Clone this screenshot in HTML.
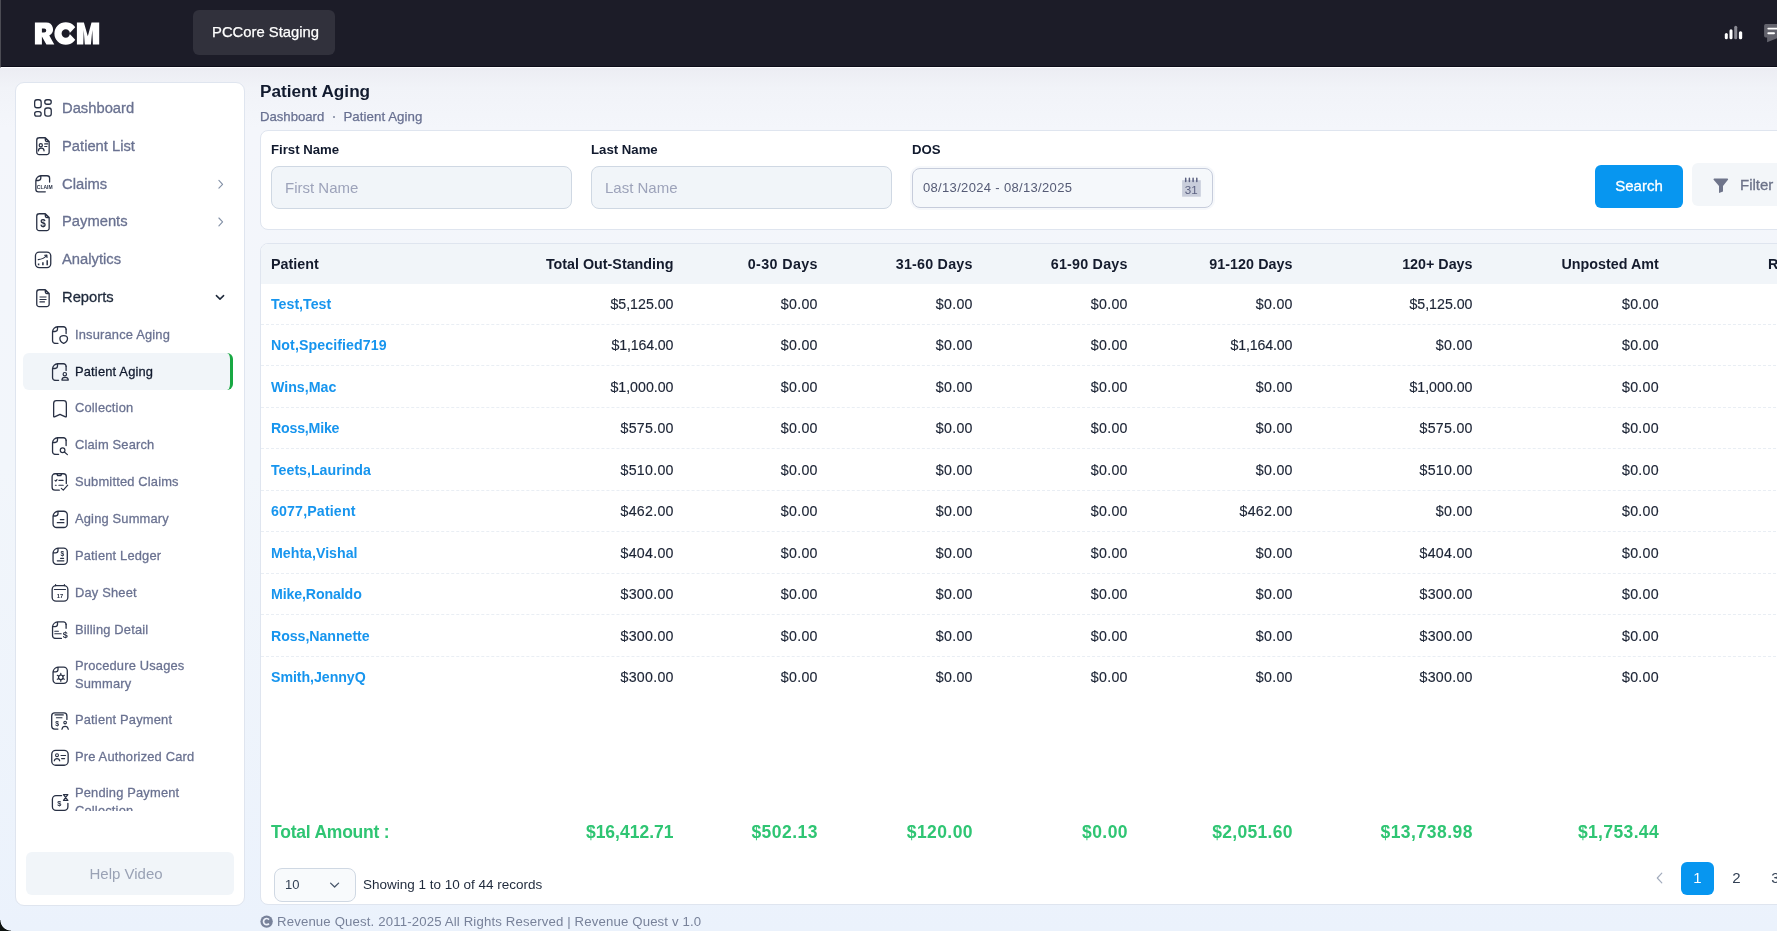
<!DOCTYPE html>
<html>
<head>
<meta charset="utf-8">
<title>Patient Aging</title>
<style>
*{box-sizing:border-box;margin:0;padding:0}
html,body{width:1777px;height:931px;overflow:hidden}
body{font-family:"Liberation Sans",sans-serif;background:#eef2fb;position:relative;color:#1e293b}
#root{position:absolute;left:0;top:0;width:1777px;height:931px;will-change:transform}
.abs{position:absolute}
#bg{left:0;top:68px;width:1777px;height:863px;background:linear-gradient(180deg,#ecedf3 0px,#f1f3f8 20px,#f4f6fb 60px,#f2f6fb 400px,#ebf2fc 863px)}
#hdr{left:0;top:0;width:1777px;height:68px;background:#1c1c28;border-bottom:1px solid #fdfdff;box-shadow:inset 0 -1px 0 #0c0c19;border-left:1px solid #4c4c54}
#env{left:193px;top:10px;width:142px;height:45px;background:#31313c;border-radius:6px;color:#fff;font-size:14.8px;line-height:44.5px;text-align:center;padding-left:3px;-webkit-text-stroke:.25px}
#side{left:15px;top:82px;width:230px;height:824px;background:#fff;border:1px solid #dfe5ef;border-radius:9px}
#sclip{left:16px;top:83px;width:228px;height:728px;overflow:hidden}
.mi{position:absolute;left:46px;font-size:14.75px;color:#6a7291;-webkit-text-stroke:.3px;line-height:20px;white-space:nowrap}
.si{position:absolute;left:59px;font-size:12.9px;letter-spacing:.17px;color:#6a7291;-webkit-text-stroke:.28px;line-height:18px;white-space:nowrap}
#act{left:7px;top:270px;width:210px;height:37px;background:#f1f5f9;border-radius:6px;border-right:3px solid #18a843}
#help{left:26px;top:852px;width:208px;height:42.5px;background:#f1f5f9;border-radius:6px;color:#9aa2b5;font-size:15px;line-height:44.5px;padding-left:63.5px}
#title{left:260px;top:80px;font-size:17.2px;font-weight:700;color:#111a2e;line-height:22px}
#crumb{left:260px;top:108px;font-size:13.3px;color:#687091;-webkit-text-stroke:.25px;line-height:17px;white-space:nowrap}
#fcard{left:260px;top:130px;width:1540px;height:100px;background:#fff;border:1px solid #dfe5ef;border-radius:8px}
.lbl{position:absolute;top:141px;font-size:13.2px;font-weight:700;color:#111a2e;line-height:17px}
.inp{position:absolute;top:166px;width:301px;height:43px;background:#f1f5f9;border:1px solid #cfd8e3;border-radius:8px;font-size:15px;color:#9da3ba;line-height:41px;padding-left:13px}
#search{left:1595px;top:165px;width:88px;height:43px;background:#0796f0;border-radius:6px;color:#fff;-webkit-text-stroke:.3px;font-size:15px;line-height:41px;text-align:center}
#filter{left:1692px;top:163px;width:120px;height:43px;background:#f3f6f9;border-radius:6px;color:#6c7389;-webkit-text-stroke:.3px;font-size:15px;line-height:43px;padding-left:48px}
#tcard{left:260px;top:243px;width:1540px;height:662px;background:#fff;border:1px solid #dfe5ef;border-radius:8px}
#thead{left:261px;top:244px;width:1530px;height:40px;background:#f1f5f9;border-radius:7px 0 0 0}
.th{position:absolute;top:256px;font-size:14.3px;font-weight:700;color:#141b2d;line-height:17px;white-space:nowrap;text-align:right}
.rl{position:absolute;left:261px;width:1530px;height:0;border-top:1px dashed #e9eef4}
.td{position:absolute;font-size:14.2px;color:#1c2435;-webkit-text-stroke:.15px;line-height:17px;white-space:nowrap;text-align:right}
.nm{position:absolute;left:271px;font-size:14.2px;font-weight:700;color:#1795ee;line-height:17px;white-space:nowrap}
.tot{position:absolute;top:821px;font-size:17.5px;font-weight:700;color:#2fc573;line-height:22px;white-space:nowrap;text-align:right}
#sel{left:274px;top:868px;width:82px;height:34px;background:#f8fafc;border:1px solid #cfd8e3;border-radius:8px;font-size:13px;color:#334155;line-height:32px;padding-left:10px}
#showing{left:363px;top:876px;font-size:13.5px;color:#1e293b;line-height:17px;white-space:nowrap}
.pg{position:absolute;top:862px;width:33px;height:33px;border-radius:6px;font-size:15px;line-height:31px;text-align:center;color:#334155}
#foot{left:277px;top:913px;font-size:13.2px;letter-spacing:.15px;color:#78829a;line-height:17px;white-space:nowrap}
#corner{left:0;top:920px;width:11px;height:11px;background:radial-gradient(circle at 11px 0,transparent 10.2px,#0d1210 11px)}
.dos{position:absolute;left:912px;top:168px;width:301px;height:40px;background:#f5f8fb;border:1px solid #c6ccdb;border-radius:8px;box-shadow:0 0 0 2px #f6f8fb;font-size:13px;letter-spacing:.33px;color:#555b75;line-height:38px;padding-left:10px}
</style>
</head>
<body>
<div id="root">
<div id="bg" class="abs"></div>
<div id="hdr" class="abs"></div>
<div id="tcard" class="abs"></div><div id="thead" class="abs"></div>
<div id="env" class="abs">PCCore Staging</div>
<div id="side" class="abs"></div>
<div id="sclip" class="abs">
<div id="act" class="abs"></div>
<div class="mi" style="top:15px">Dashboard</div>
<div class="mi" style="top:53px">Patient List</div>
<div class="mi" style="top:91px">Claims</div>
<div class="mi" style="top:128px">Payments</div>
<div class="mi" style="top:166px">Analytics</div>
<div class="mi" style="top:204px;color:#1e293b">Reports</div>
<div class="si" style="top:243px">Insurance Aging</div>
<div class="si" style="top:280px;color:#111a2e">Patient Aging</div>
<div class="si" style="top:316px">Collection</div>
<div class="si" style="top:353px">Claim Search</div>
<div class="si" style="top:390px">Submitted Claims</div>
<div class="si" style="top:427px">Aging Summary</div>
<div class="si" style="top:464px">Patient Ledger</div>
<div class="si" style="top:501px">Day Sheet</div>
<div class="si" style="top:538px">Billing Detail</div>
<div class="si" style="top:574px">Procedure Usages<br>Summary</div>
<div class="si" style="top:628px">Patient Payment</div>
<div class="si" style="top:665px">Pre Authorized Card</div>
<div class="si" style="top:701px">Pending Payment<br>Collection</div>
</div>
<div id="help" class="abs">Help Video</div>
<div id="title" class="abs">Patient Aging</div>
<div id="crumb" class="abs"><span style="font-size:13.15px">Dashboard</span><span style="position:absolute;left:72.6px;top:7.6px;width:2.6px;height:2.6px;border-radius:2px;background:#7b839d"></span><span style="position:absolute;left:83.4px;top:0;letter-spacing:.05px">Patient Aging</span></div>
<div id="fcard" class="abs"></div>
<div class="lbl" style="left:271px">First Name</div>
<div class="lbl" style="left:591px">Last Name</div>
<div class="lbl" style="left:912px">DOS</div>
<div class="inp" style="left:271px">First Name</div>
<div class="inp" style="left:591px">Last Name</div>
<div class="dos">08/13/2024 - 08/13/2025</div>
<div id="search" class="abs">Search</div>
<div id="filter" class="abs">Filter</div>
<div id="sel" class="abs">10</div>
<div id="showing" class="abs">Showing 1 to 10 of 44 records</div>
<div class="pg" style="left:1681px;background:#0796f0;color:#fff">1</div>
<div class="pg" style="left:1720px">2</div>
<div class="pg" style="left:1759px">3</div>
<div id="foot" class="abs">Revenue Quest. 2011-2025 All Rights Reserved | Revenue Quest v 1.0</div>
<div id="corner" class="abs"></div>

<div class="th" style="left:271px;text-align:left">Patient</div>
<div class="th" style="right:1103.5px;letter-spacing:0px">Total Out-Standing</div>
<div class="th" style="right:959.12px;letter-spacing:0.38px">0-30 Days</div>
<div class="th" style="right:804.27px;letter-spacing:0.23px">31-60 Days</div>
<div class="th" style="right:649.27px;letter-spacing:0.23px">61-90 Days</div>
<div class="th" style="right:484.44px;letter-spacing:0.06px">91-120 Days</div>
<div class="th" style="right:304.5px;letter-spacing:0px">120+ Days</div>
<div class="th" style="right:118.29999999999995px;letter-spacing:0px">Unposted Amt</div>
<div class="th" style="left:1768px;text-align:left">Responsible</div>
<div class="rl" style="top:324px"></div>
<div class="nm" style="top:295.50px;letter-spacing:0px">Test,Test</div>
<div class="td" style="top:295.50px;right:1103.5px;letter-spacing:0px">$5,125.00</div>
<div class="td" style="top:295.50px;right:959.18px;letter-spacing:0.32px">$0.00</div>
<div class="td" style="top:295.50px;right:804.18px;letter-spacing:0.32px">$0.00</div>
<div class="td" style="top:295.50px;right:649.18px;letter-spacing:0.32px">$0.00</div>
<div class="td" style="top:295.50px;right:484.18px;letter-spacing:0.32px">$0.00</div>
<div class="td" style="top:295.50px;right:304.5px;letter-spacing:0px">$5,125.00</div>
<div class="td" style="top:295.50px;right:117.97999999999996px;letter-spacing:0.32px">$0.00</div>
<div class="rl" style="top:365px"></div>
<div class="nm" style="top:337.00px;letter-spacing:0.09px">Not,Specified719</div>
<div class="td" style="top:337.00px;right:1103.64px;letter-spacing:-0.14px">$1,164.00</div>
<div class="td" style="top:337.00px;right:959.18px;letter-spacing:0.32px">$0.00</div>
<div class="td" style="top:337.00px;right:804.18px;letter-spacing:0.32px">$0.00</div>
<div class="td" style="top:337.00px;right:649.18px;letter-spacing:0.32px">$0.00</div>
<div class="td" style="top:337.00px;right:484.64px;letter-spacing:-0.14px">$1,164.00</div>
<div class="td" style="top:337.00px;right:304.18px;letter-spacing:0.32px">$0.00</div>
<div class="td" style="top:337.00px;right:117.97999999999996px;letter-spacing:0.32px">$0.00</div>
<div class="rl" style="top:407px"></div>
<div class="nm" style="top:378.50px;letter-spacing:0px">Wins,Mac</div>
<div class="td" style="top:378.50px;right:1103.5px;letter-spacing:0px">$1,000.00</div>
<div class="td" style="top:378.50px;right:959.18px;letter-spacing:0.32px">$0.00</div>
<div class="td" style="top:378.50px;right:804.18px;letter-spacing:0.32px">$0.00</div>
<div class="td" style="top:378.50px;right:649.18px;letter-spacing:0.32px">$0.00</div>
<div class="td" style="top:378.50px;right:484.18px;letter-spacing:0.32px">$0.00</div>
<div class="td" style="top:378.50px;right:304.5px;letter-spacing:0px">$1,000.00</div>
<div class="td" style="top:378.50px;right:117.97999999999996px;letter-spacing:0.32px">$0.00</div>
<div class="rl" style="top:448px"></div>
<div class="nm" style="top:420.00px;letter-spacing:-0.21px">Ross,Mike</div>
<div class="td" style="top:420.00px;right:1103.22px;letter-spacing:0.28px">$575.00</div>
<div class="td" style="top:420.00px;right:959.18px;letter-spacing:0.32px">$0.00</div>
<div class="td" style="top:420.00px;right:804.18px;letter-spacing:0.32px">$0.00</div>
<div class="td" style="top:420.00px;right:649.18px;letter-spacing:0.32px">$0.00</div>
<div class="td" style="top:420.00px;right:484.18px;letter-spacing:0.32px">$0.00</div>
<div class="td" style="top:420.00px;right:304.22px;letter-spacing:0.28px">$575.00</div>
<div class="td" style="top:420.00px;right:117.97999999999996px;letter-spacing:0.32px">$0.00</div>
<div class="rl" style="top:490px"></div>
<div class="nm" style="top:461.50px;letter-spacing:0px">Teets,Laurinda</div>
<div class="td" style="top:461.50px;right:1103.22px;letter-spacing:0.28px">$510.00</div>
<div class="td" style="top:461.50px;right:959.18px;letter-spacing:0.32px">$0.00</div>
<div class="td" style="top:461.50px;right:804.18px;letter-spacing:0.32px">$0.00</div>
<div class="td" style="top:461.50px;right:649.18px;letter-spacing:0.32px">$0.00</div>
<div class="td" style="top:461.50px;right:484.18px;letter-spacing:0.32px">$0.00</div>
<div class="td" style="top:461.50px;right:304.22px;letter-spacing:0.28px">$510.00</div>
<div class="td" style="top:461.50px;right:117.97999999999996px;letter-spacing:0.32px">$0.00</div>
<div class="rl" style="top:531px"></div>
<div class="nm" style="top:503.00px;letter-spacing:0.15px">6077,Patient</div>
<div class="td" style="top:503.00px;right:1103.22px;letter-spacing:0.28px">$462.00</div>
<div class="td" style="top:503.00px;right:959.18px;letter-spacing:0.32px">$0.00</div>
<div class="td" style="top:503.00px;right:804.18px;letter-spacing:0.32px">$0.00</div>
<div class="td" style="top:503.00px;right:649.18px;letter-spacing:0.32px">$0.00</div>
<div class="td" style="top:503.00px;right:484.22px;letter-spacing:0.28px">$462.00</div>
<div class="td" style="top:503.00px;right:304.18px;letter-spacing:0.32px">$0.00</div>
<div class="td" style="top:503.00px;right:117.97999999999996px;letter-spacing:0.32px">$0.00</div>
<div class="rl" style="top:573px"></div>
<div class="nm" style="top:544.50px;letter-spacing:0px">Mehta,Vishal</div>
<div class="td" style="top:544.50px;right:1103.22px;letter-spacing:0.28px">$404.00</div>
<div class="td" style="top:544.50px;right:959.18px;letter-spacing:0.32px">$0.00</div>
<div class="td" style="top:544.50px;right:804.18px;letter-spacing:0.32px">$0.00</div>
<div class="td" style="top:544.50px;right:649.18px;letter-spacing:0.32px">$0.00</div>
<div class="td" style="top:544.50px;right:484.18px;letter-spacing:0.32px">$0.00</div>
<div class="td" style="top:544.50px;right:304.22px;letter-spacing:0.28px">$404.00</div>
<div class="td" style="top:544.50px;right:117.97999999999996px;letter-spacing:0.32px">$0.00</div>
<div class="rl" style="top:614px"></div>
<div class="nm" style="top:586.00px;letter-spacing:-0.13px">Mike,Ronaldo</div>
<div class="td" style="top:586.00px;right:1103.22px;letter-spacing:0.28px">$300.00</div>
<div class="td" style="top:586.00px;right:959.18px;letter-spacing:0.32px">$0.00</div>
<div class="td" style="top:586.00px;right:804.18px;letter-spacing:0.32px">$0.00</div>
<div class="td" style="top:586.00px;right:649.18px;letter-spacing:0.32px">$0.00</div>
<div class="td" style="top:586.00px;right:484.18px;letter-spacing:0.32px">$0.00</div>
<div class="td" style="top:586.00px;right:304.22px;letter-spacing:0.28px">$300.00</div>
<div class="td" style="top:586.00px;right:117.97999999999996px;letter-spacing:0.32px">$0.00</div>
<div class="rl" style="top:656px"></div>
<div class="nm" style="top:627.50px;letter-spacing:-0.06px">Ross,Nannette</div>
<div class="td" style="top:627.50px;right:1103.22px;letter-spacing:0.28px">$300.00</div>
<div class="td" style="top:627.50px;right:959.18px;letter-spacing:0.32px">$0.00</div>
<div class="td" style="top:627.50px;right:804.18px;letter-spacing:0.32px">$0.00</div>
<div class="td" style="top:627.50px;right:649.18px;letter-spacing:0.32px">$0.00</div>
<div class="td" style="top:627.50px;right:484.18px;letter-spacing:0.32px">$0.00</div>
<div class="td" style="top:627.50px;right:304.22px;letter-spacing:0.28px">$300.00</div>
<div class="td" style="top:627.50px;right:117.97999999999996px;letter-spacing:0.32px">$0.00</div>
<div class="nm" style="top:669.00px;letter-spacing:-0.06px">Smith,JennyQ</div>
<div class="td" style="top:669.00px;right:1103.22px;letter-spacing:0.28px">$300.00</div>
<div class="td" style="top:669.00px;right:959.18px;letter-spacing:0.32px">$0.00</div>
<div class="td" style="top:669.00px;right:804.18px;letter-spacing:0.32px">$0.00</div>
<div class="td" style="top:669.00px;right:649.18px;letter-spacing:0.32px">$0.00</div>
<div class="td" style="top:669.00px;right:484.18px;letter-spacing:0.32px">$0.00</div>
<div class="td" style="top:669.00px;right:304.22px;letter-spacing:0.28px">$300.00</div>
<div class="td" style="top:669.00px;right:117.97999999999996px;letter-spacing:0.32px">$0.00</div>
<div class="tot" style="left:271px;text-align:left;letter-spacing:-.22px">Total Amount :</div>
<div class="tot" style="right:1103.5px;letter-spacing:0px">$16,412.71</div>
<div class="tot" style="right:959.03px;letter-spacing:0.47px">$502.13</div>
<div class="tot" style="right:804.1px;letter-spacing:0.4px">$120.00</div>
<div class="tot" style="right:649.1px;letter-spacing:0.4px">$0.00</div>
<div class="tot" style="right:484.2px;letter-spacing:0.3px">$2,051.60</div>
<div class="tot" style="right:304.0px;letter-spacing:0.5px">$13,738.98</div>
<div class="tot" style="right:117.92999999999995px;letter-spacing:0.37px">$1,753.44</div>
<svg class="abs" style="left:30px;top:18px" width="75" height="30" viewBox="30 18 75 30">
<path fill="#fff" fill-rule="evenodd" d="M34.9,22.6H46.2a6.85,6.85 0 0 1 3.1,12.95L54.3,44.4H46.4L41.9,36.6V44.4H34.9zM41.9,28.5V32.6H44.2a2.05,2.05 0 0 0 0-4.1z"/>
<circle cx="65.75" cy="33.5" r="7.75" fill="none" stroke="#fff" stroke-width="7.2"/>
<path fill="#1c1c28" d="M69.3,33.5L79,23.2V43.8z"/>
<path fill="#fff" d="M76.9,44.4V22.6H83.9L87.8,36.2L91.5,22.6H99.2V44.4H92.9L92.3,30L90.9,44.4H84.8L83.7,30L83.3,44.4z"/>
</svg>
<svg class="abs" style="left:0;top:0" width="260" height="931" viewBox="0 0 260 931" fill="none" stroke="#283044" stroke-width="1.3" stroke-linecap="round" stroke-linejoin="round">
<defs>
<path id="doc" d="M2.9,.65H9.2L13.05,4.4V15.1a2.4,2.4 0 0 1-2.4,2.4H3.05a2.4,2.4 0 0 1-2.4-2.4V3.05A2.4,2.4 0 0 1 3.05,.65zM9.2,.65V3a1.4,1.4 0 0 0 1.4,1.4H13.05"/>
<path id="odoc" d="M5.6,.65H11.6a2.6,2.6 0 0 1 2.6,2.6M5.6,.65C3.2,.9 .9,3 .65,5.4V14.6a2.6,2.6 0 0 0 2.6,2.6M5.6,.65V3a2.4,2.4 0 0 1-2.4,2.4H.65"/>
<path id="rdoc" d="M5.6,.65H11.3a3.6,3.6 0 0 1 3.6,3.6V13.3a3.6,3.6 0 0 1-3.6,3.6H4.25a3.6,3.6 0 0 1-3.6-3.6V5.4C.9,3 3.2,.9 5.6,.65zM5.6,.65V3a2.4,2.4 0 0 1-2.4,2.4H.65"/>
</defs>
<!-- dashboard -->
<rect x="34.65" y="99.75" width="6.5" height="8" rx="2.3"/>
<rect x="44.75" y="99.75" width="6.5" height="4.5" rx="2.2"/>
<rect x="34.65" y="111.55" width="6.5" height="4.6" rx="2.2"/>
<rect x="44.75" y="108" width="6.5" height="8.15" rx="2.3"/>
<!-- patient list -->
<use href="#doc" x="36.1" y="137.1"/>
<circle cx="40.8" cy="145.3" r="1.6" stroke-width="1.2"/>
<path d="M38.4,150.9C38.6,147.3 43.9,147.3 44.1,150.9M44.7,143.9h3M44.7,146.5h2.2" stroke-width="1.2"/>
<!-- claims -->
<path d="M40.8,175.75H47a2.6,2.6 0 0 1 2.6,2.6V182M40.8,175.75C38.4,176 36.1,178.1 35.85,180.5V189.2a2.6,2.6 0 0 0 2.6,2.6H45.3M40.8,175.75V178.1a2.4,2.4 0 0 1-2.4,2.4H35.85"/>
<text x="36.8" y="188.9" font-family="Liberation Sans" font-weight="700" font-size="5.6" fill="#283044" stroke="none" textLength="15.8" lengthAdjust="spacingAndGlyphs">CLAIM</text>
<!-- payments -->
<use href="#doc" x="36.1" y="213.1"/>
<text x="43" y="226.8" font-family="Liberation Sans" font-weight="700" font-size="10" fill="#283044" stroke="none" text-anchor="middle">$</text>
<!-- analytics -->
<rect x="35.45" y="252.15" width="15.3" height="15.4" rx="3.8"/>
<path d="M38.6,263.4V265.3M42.9,262.2V265.3M47.2,260.2V265.3" stroke-width="1.5" stroke-linecap="butt"/>
<path d="M38.2,259.6C42,259.3 44.8,257.8 46.6,255.5M44.6,255.2L46.9,255.1L47,257.4" stroke-width="1.1"/>
<!-- reports -->
<use href="#doc" x="36.1" y="289.1"/>
<path d="M39.5,297h7M39.5,299.5h7M39.5,301.9h5.4" stroke-width="1.2" stroke-linecap="butt"/>
<!-- chevrons -->
<path d="M218.9,180.4L222.6,184.3L218.9,188.2M218.9,218L222.6,221.9L218.9,225.8" stroke="#8290a6" stroke-width="1.1"/>
<path d="M216.4,295.6L220,299.1L223.6,295.6" stroke="#1e293b" stroke-width="1.5"/>
<!-- insurance aging -->
<use href="#odoc" x="51.9" y="326.1"/><path d="M66.1,329.3V333.6M55.1,343.3H58"/>
<path d="M63.7,335.7C65.7,335.7 67.5,336.6 67.5,338.6C67.5,341 65.6,342.6 63.7,343.4C61.8,342.6 59.9,341 59.9,338.6C59.9,336.6 61.7,335.7 63.7,335.7z"/>
<!-- patient aging -->
<use href="#odoc" x="51.9" y="363.1"/><path d="M66.1,366.3V370.4M55.1,380.3H58.6"/>
<circle cx="64.8" cy="374.2" r="1.7" stroke-width="1.2"/><path d="M61.9,380.1C61.9,376.4 68.3,376.4 68.3,380.1z" stroke-width="1.2"/>
<!-- collection -->
<path d="M53.65,403.4a2.7,2.7 0 0 1 2.7-2.7h7.3a2.7,2.7 0 0 1 2.7,2.7V416.3a.6,.6 0 0 1-.9,.55L60,414.3L54.55,416.85a.6,.6 0 0 1-.9-.55z"/>
<!-- claim search -->
<use href="#odoc" x="51.9" y="437.1"/><path d="M66.1,440.3V445.6M55.1,454.3H58.6"/>
<circle cx="62.6" cy="450.2" r="2.35" stroke-width="1.2"/><path d="M64.4,452L67.4,454.6" stroke-width="1.2"/>
<!-- submitted claims -->
<path d="M59.3,490.15H55a2.9,2.9 0 0 1-2.9-2.9V476.65a2.9,2.9 0 0 1 2.9-2.9H63.4a2.9,2.9 0 0 1 2.9,2.9V483.6M56.8,473.9L57.7,475.6H60.8L61.7,473.9" />
<path d="M55,480.4L55.8,481.1L57,479.6M58.9,480.3H63.2M55.4,485.2H56.2M58.9,485.2H63.2M61.3,488.3L63.3,490.2L67.7,485.2" stroke-width="1.15"/>
<!-- aging summary -->
<use href="#rdoc" x="52.4" y="510.6"/>
<path d="M60.3,519.6H63.9M57.3,522.7H63.9" stroke-width="1.2"/>
<!-- patient ledger -->
<use href="#rdoc" x="52.4" y="547.4"/>
<text x="62.3" y="556" font-family="Liberation Sans" font-weight="700" font-size="6.6" fill="#283044" stroke="none" text-anchor="middle">$</text>
<path d="M60.6,558.3H63.6M57.3,560.8H63.9" stroke-width="1.2"/>
<!-- day sheet -->
<rect x="52.15" y="585.6" width="15.7" height="15.6" rx="3.9"/>
<path d="M54.4,589.5H65.5M55.6,584.7V585.6M64.4,584.7V585.6" stroke-width="1.2"/>
<text x="60" y="597.9" font-family="Liberation Sans" font-weight="700" font-size="5.8" fill="#283044" stroke="none" text-anchor="middle">17</text>
<!-- billing detail -->
<use href="#odoc" x="51.9" y="621.2"/><path d="M66.1,624.4V628.3M55.1,638.4H61.4"/>
<path d="M54.8,631.3H58.4M54.8,633.7H61.2" stroke-width="1.1"/>
<text x="65.3" y="638" font-family="Liberation Sans" font-weight="700" font-size="9" fill="#283044" stroke="none" text-anchor="middle">$</text>
<!-- procedure usages -->
<use href="#rdoc" x="52.4" y="666.5"/>
<circle cx="60.8" cy="677.3" r="2.3" stroke-width="1.2"/>
<path d="M60.8,673.3V675M60.8,679.6V681.3M57.3,675.3L58.8,676.15M62.8,678.45L64.3,679.3M57.3,679.3L58.8,678.45M62.8,676.15L64.3,675.3" stroke-width="1.2"/>
<!-- patient payment -->
<path d="M57.9,729.1H54.7a3,3 0 0 1-3-3V715.9a3,3 0 0 1 3-3H63.9a3,3 0 0 1 3,3V719.4"/>
<path d="M55,714.9H63.3M56.4,717.7H62" stroke-width="1.15"/>
<text x="57.2" y="726.2" font-family="Liberation Sans" font-weight="700" font-size="6.8" fill="#283044" stroke="none" text-anchor="middle">$</text>
<circle cx="65.1" cy="722.6" r="1.3" stroke-width="1.1"/><path d="M61.9,729.3C62.6,725.4 67.6,725.4 68.3,729.3" stroke-width="1.15"/>
<!-- pre authorized card -->
<rect x="51.75" y="750.35" width="16.4" height="14.9" rx="4"/>
<circle cx="57" cy="755.2" r="1.45" stroke-width="1.1"/>
<path d="M54.3,760.8C54.8,757.8 59.2,757.8 59.7,760.8M61,755.5H65.6M61.6,758.6H64.6" stroke-width="1.15"/>
<!-- pending payment -->
<path d="M61.6,795.6H56a3.6,3.6 0 0 0-3.6,3.6V806.8a3.6,3.6 0 0 0 3.6,3.6H64.3a3.6,3.6 0 0 0 3.6-3.6V803.3"/>
<path d="M63.4,794.6H67.9L63.4,800.4H67.9L63.4,794.6z" stroke-width="1.1"/>
<text x="59.4" y="806.3" font-family="Liberation Sans" font-weight="700" font-size="7.4" fill="#283044" stroke="none" text-anchor="middle">$</text>
</svg>
<svg class="abs" style="left:1700px;top:0" width="77" height="220" viewBox="1700 0 77 220">
<rect x="1724.8" y="33" width="3" height="6.3" rx="1.5" fill="#fff"/>
<rect x="1729.5" y="29.3" width="3" height="10" rx="1.5" fill="#fff"/>
<rect x="1734.2" y="25.8" width="3" height="13.5" rx="1.5" fill="#8a8a93"/>
<rect x="1738.9" y="31.2" width="3.3" height="8.1" rx="1.5" fill="#fff"/>
<path d="M1765.7,24.1H1777V38.2L1767.1,42.2V37.4H1765.7a1.6,1.6 0 0 1-1.6-1.6V25.7a1.6,1.6 0 0 1 1.6-1.6z" fill="#63636d"/>
<path d="M1768.3,28.6H1777M1768.3,33.2H1774" stroke="#fff" stroke-width="1.9" stroke-linecap="round"/>
<path d="M1714.2,178.6H1727.4a.7,.7 0 0 1 .55,1.15L1723,185.9V191.4L1719,193V185.9L1713.65,179.75a.7,.7 0 0 1 .55-1.15z" fill="#6f758b"/>
</svg>
<svg class="abs" style="left:250px;top:850px" width="1527" height="81" viewBox="250 850 1527 81" fill="none">
<path d="M330.6,883.1L334.6,887L338.6,883.1" stroke="#475569" stroke-width="1.3" stroke-linecap="round" stroke-linejoin="round"/>
<path d="M1661.8,873.2L1657.3,878L1661.8,882.8" stroke="#a3acbd" stroke-width="1.2" stroke-linecap="round" stroke-linejoin="round"/>
<circle cx="266.6" cy="921.6" r="6.2" fill="#78829a"/>
<path d="M269,919.6a3.1,3.1 0 1 0 0,4" stroke="#eef2fb" stroke-width="1.7"/>
</svg>
<svg class="abs" style="left:1180px;top:176px" width="24" height="24" viewBox="1180 176 24 24">
<rect x="1182.1" y="180.2" width="18.7" height="16.5" fill="#c9cedb"/>
<path d="M1185.7,178.3V181.4M1189.4,178.3V181.4M1193.1,178.3V181.4M1196.8,178.3V181.4" stroke="#5b6180" stroke-width="1.5" stroke-linecap="round"/>
<text x="1191.3" y="193.8" font-family="Liberation Sans" font-size="11.6" fill="#5b6180" text-anchor="middle">31</text>
</svg>

</div>
</body>
</html>
